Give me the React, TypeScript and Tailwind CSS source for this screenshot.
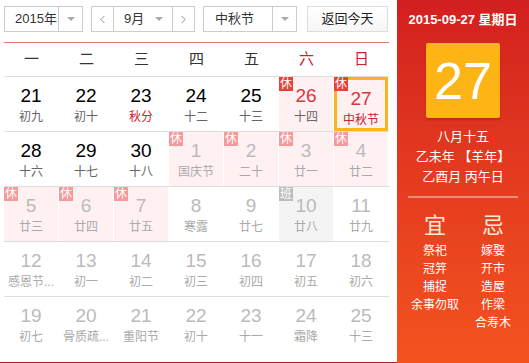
import { ChevronLeft, ChevronRight } from 'lucide-react'

type Day = {
  n: number
  l: string
  other?: boolean
  red?: boolean
  redLunar?: boolean
  tag?: '休' | '班'
  sel?: boolean
}

const rows: Day[][] = [
  [
    { n: 21, l: '初九' },
    { n: 22, l: '初十' },
    { n: 23, l: '秋分', redLunar: true },
    { n: 24, l: '十二' },
    { n: 25, l: '十三' },
    { n: 26, l: '十四', red: true, tag: '休' },
    { n: 27, l: '中秋节', red: true, redLunar: true, tag: '休', sel: true },
  ],
  [
    { n: 28, l: '十六' },
    { n: 29, l: '十七' },
    { n: 30, l: '十八' },
    { n: 1, l: '国庆节', other: true, tag: '休' },
    { n: 2, l: '二十', other: true, tag: '休' },
    { n: 3, l: '廿一', other: true, tag: '休' },
    { n: 4, l: '廿二', other: true, tag: '休' },
  ],
  [
    { n: 5, l: '廿三', other: true, tag: '休' },
    { n: 6, l: '廿四', other: true, tag: '休' },
    { n: 7, l: '廿五', other: true, tag: '休' },
    { n: 8, l: '寒露', other: true },
    { n: 9, l: '廿七', other: true },
    { n: 10, l: '廿八', other: true, tag: '班' },
    { n: 11, l: '廿九', other: true },
  ],
  [
    { n: 12, l: '感恩节...', other: true },
    { n: 13, l: '初一', other: true },
    { n: 14, l: '初二', other: true },
    { n: 15, l: '初三', other: true },
    { n: 16, l: '初四', other: true },
    { n: 17, l: '初五', other: true },
    { n: 18, l: '初六', other: true },
  ],
  [
    { n: 19, l: '初七', other: true },
    { n: 20, l: '骨质疏...', other: true },
    { n: 21, l: '重阳节', other: true },
    { n: 22, l: '初十', other: true },
    { n: 23, l: '十一', other: true },
    { n: 24, l: '霜降', other: true },
    { n: 25, l: '十三', other: true },
  ],
]

const weekdays = ['一', '二', '三', '四', '五', '六', '日']

function Caret() {
  return <span className="h-0 w-0 border-x-[4px] border-t-[4px] border-x-transparent border-t-[#aaa]" />
}

function Cell({ d }: { d: Day }) {
  let bg = ''
  if (d.tag === '休') bg = 'bg-[#fff0f2]'
  if (d.tag === '班') bg = 'bg-[#f4f4f4]'
  const num = d.other ? 'text-[#bbb]' : d.red ? 'text-[#d9353c]' : 'text-black'
  const lunar = d.other ? 'text-[#aaa]' : d.redLunar ? 'text-[#c8232c]' : 'text-[#666]'
  let badge = ''
  if (d.tag === '休') badge = d.other ? 'bg-[#f49a9a]' : 'bg-[#e8413a]'
  if (d.tag === '班') badge = 'bg-[#bdbdbd]'
  return (
    <div className="h-full w-[55px] pr-px">
      <div
        className={`relative flex h-full flex-col items-center pt-[8px] ${bg} ${
          d.sel ? 'border-[3px] border-[#fbb41c] pt-[5px]' : ''
        }`}
      >
        {d.tag && (
          <span
            className={`absolute flex h-[14px] w-[14px] items-center justify-center text-[12px] leading-none text-white ${badge} ${
              d.sel ? '-left-[3px] -top-[3px]' : 'left-0 top-0'
            }`}
          >
            {d.tag}
          </span>
        )}
        <span className={`text-[19px] leading-[22px] ${num}`}>{d.n}</span>
        <span className={`mt-[3px] whitespace-nowrap text-[12px] leading-[14px] ${lunar}`}>{d.l}</span>
      </div>
    </div>
  )
}

export default function App() {
  return (
    <div
      className="flex h-[363px] w-[529px] overflow-hidden bg-white"
      style={{ fontFamily: '"Liberation Sans", "Noto Sans CJK SC", sans-serif' }}
    >
      <div className="flex w-[397px] flex-col border-b border-[#a8242c]">
        <div className="flex h-[42px] items-start gap-[8px] pl-[4px] pt-[6px] text-[13px] text-[#333]">
          <div className="flex h-[26px] w-[79px] items-center border border-[#ccc]">
            <span className="flex-1 whitespace-nowrap pl-[10px]">2015年</span>
            <span className="flex h-full w-[24px] shrink-0 items-center justify-center border-l border-[#ccc]">
              <Caret />
            </span>
          </div>
          <div className="flex h-[26px] w-[104px] items-center border border-[#ccc]">
            <span className="flex h-full w-[22px] items-center justify-center border-r border-[#ccc] text-[#777]">
              <ChevronLeft size={13} strokeWidth={1.5} />
            </span>
            <span className="flex flex-1 items-center justify-between pl-[10px] pr-[9px]">
              9月
              <Caret />
            </span>
            <span className="flex h-full w-[22px] items-center justify-center border-l border-[#ccc] text-[#777]">
              <ChevronRight size={13} strokeWidth={1.5} />
            </span>
          </div>
          <div className="flex h-[26px] w-[94px] items-center border border-[#ccc]">
            <span className="flex-1 whitespace-nowrap pl-[11px]">中秋节</span>
            <span className="flex h-full w-[24px] shrink-0 items-center justify-center border-l border-[#ccc]">
              <Caret />
            </span>
          </div>
          <div className="ml-[2px] flex h-[26px] w-[81px] items-center justify-center border border-[#ddd] bg-gradient-to-b from-white to-[#f6f6f6] text-[#222]">
            返回今天
          </div>
        </div>
        <div className="mx-[4px] w-[385px] border-t border-[#e37a6c]">
          <div className="flex h-[34px] items-center border-b border-[#ddd] text-[15px]">
            {weekdays.map((w, i) => (
              <span key={w} className={`w-[55px] text-center ${i > 4 ? 'text-[#c8232c]' : 'text-[#333]'}`}>
                {w}
              </span>
            ))}
          </div>
          {rows.map((r, i) => (
            <div key={i} className={`flex h-[55px] ${i < 4 ? 'border-b border-[#ddd]' : ''}`}>
              {r.map((d) => (
                <Cell key={`${i}-${d.n}`} d={d} />
              ))}
            </div>
          ))}
        </div>
      </div>
      <div className="flex flex-1 flex-col items-center bg-gradient-to-b from-[#d31f1f] to-[#f5521f] text-white">
        <div className="mt-[12px] text-[13px] font-bold leading-[16px]">2015-09-27 星期日</div>
        <div className="mt-[15px] flex h-[75px] w-[74px] items-center justify-center rounded-[2px] bg-[#fdb515] text-[52px] leading-none shadow-[0_2px_2px_rgba(140,20,10,0.35)]">
          27
        </div>
        <div className="mt-[9px] flex flex-col items-center text-[13px] leading-[20px]">
          <span>八月十五</span>
          <span>乙未年 【羊年】</span>
          <span>乙酉月 丙午日</span>
        </div>
        <div className="mt-[9px] h-[2px] w-[110px] bg-[#f08a7a]" />
        <div className="mt-[10px] flex w-full justify-center pl-[2px]">
          <div className="flex w-[58px] flex-col items-center">
            <span className="text-[22px] leading-[30px] text-[#fdebd6]" style={{ fontFamily: '"Noto Sans CJK SC", serif' }}>
              宜
            </span>
            <div className="mt-[4px] flex flex-col items-center text-[12px] leading-[18px]">
              <span>祭祀</span>
              <span>冠笄</span>
              <span>捕捉</span>
              <span className="whitespace-nowrap">余事勿取</span>
            </div>
          </div>
          <div className="flex w-[58px] flex-col items-center">
            <span className="text-[22px] leading-[30px] text-[#fdebd6]" style={{ fontFamily: '"Noto Sans CJK SC", serif' }}>
              忌
            </span>
            <div className="mt-[4px] flex flex-col items-center text-[12px] leading-[18px]">
              <span>嫁娶</span>
              <span>开市</span>
              <span>造屋</span>
              <span>作梁</span>
              <span>合寿木</span>
            </div>
          </div>
        </div>
      </div>
    </div>
  )
}
